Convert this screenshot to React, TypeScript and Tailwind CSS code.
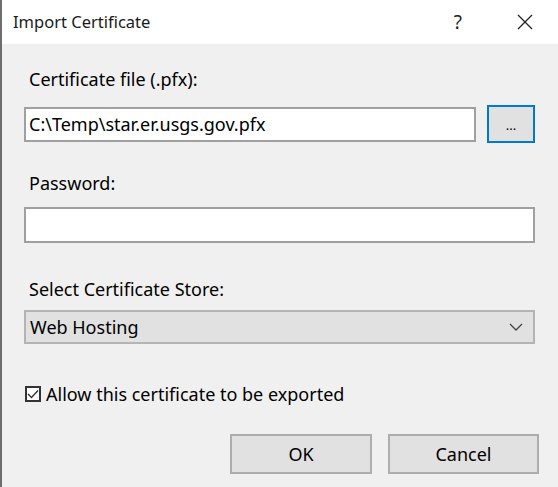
import React from 'react';

const font = { fontFamily: '"Noto Sans", "Open Sans", sans-serif' };

export default function App() {
    return (
        <div className="w-[558px] h-[487px] bg-[#f0f0f0] border-l-2 border-[#6e6e6e] flex flex-col text-[#000] overflow-hidden" style={font}>
            <div className="h-[44px] bg-white flex items-center pl-[11px] shrink-0">
                <span className="text-[16.5px] text-[#1a1a1a] leading-[22px]">Import Certificate</span>
                <span className="ml-auto text-[19px] text-[#222] mr-[55px] leading-[22px]">?</span>
                <svg width="16" height="16" viewBox="0 0 16 16" className="mr-[25px]">
                    <path d="M1 1 L15 15 M15 1 L1 15" stroke="#222" strokeWidth="1.3" />
                </svg>
            </div>

            <div className="flex flex-col pl-[22px] pr-[23px] text-[18px]">
                <label className="mt-[24px] ml-[5px] leading-[22px]">Certificate file (.pfx):</label>
                <div className="mt-[15px] flex items-center">
                    <div className="flex-1 h-[35px] bg-white border-2 border-[#a0a0a0] flex items-center pl-[3px] leading-[22px]">
                        C:\Temp\star.er.usgs.gov.pfx
                    </div>
                    <button className="ml-[11px] w-[48px] h-[38px] bg-[#e1e1e1] border-2 border-[#0078d7] flex items-end justify-center pb-[9px] text-[13px] leading-none">
                        ...
                    </button>
                </div>

                <label className="mt-[29px] ml-[5px] leading-[22px]">Password:</label>
                <div className="mt-[13px] h-[36px] bg-white border-2 border-[#a0a0a0]" />

                <label className="mt-[35px] ml-[5px] leading-[22px]">Select Certificate Store:</label>
                <div className="mt-[10px] h-[34px] bg-[#e1e1e1] border-2 border-[#b4b4b4] flex items-center pl-[4px] pr-[10px] leading-[22px]">
                    <span>Web Hosting</span>
                    <svg width="14" height="8" viewBox="0 0 14 8" className="ml-auto">
                        <path d="M1 1 L7 7 L13 1" fill="none" stroke="#444" strokeWidth="1.3" />
                    </svg>
                </div>

                <div className="mt-[38px] h-[24px] flex items-center">
                    <div className="w-[16px] h-[16px] bg-white border-2 border-[#333] flex items-center justify-center ml-[1px]">
                        <svg width="12" height="10" viewBox="0 0 12 10">
                            <path d="M1 5 L4.5 8.5 L11 1.5" fill="none" stroke="#333" strokeWidth="1.4" />
                        </svg>
                    </div>
                    <span className="ml-[5px] leading-[24px]">Allow this certificate to be exported</span>
                </div>

                <div className="mt-[28px] flex justify-end gap-[16px] mr-[-4px]">
                    <button className="w-[142px] h-[40px] bg-[#e1e1e1] border-2 border-[#adadad] leading-[22px]">OK</button>
                    <button className="w-[151px] h-[40px] bg-[#e1e1e1] border-2 border-[#adadad] leading-[22px]">Cancel</button>
                </div>
            </div>
        </div>
    );
}
